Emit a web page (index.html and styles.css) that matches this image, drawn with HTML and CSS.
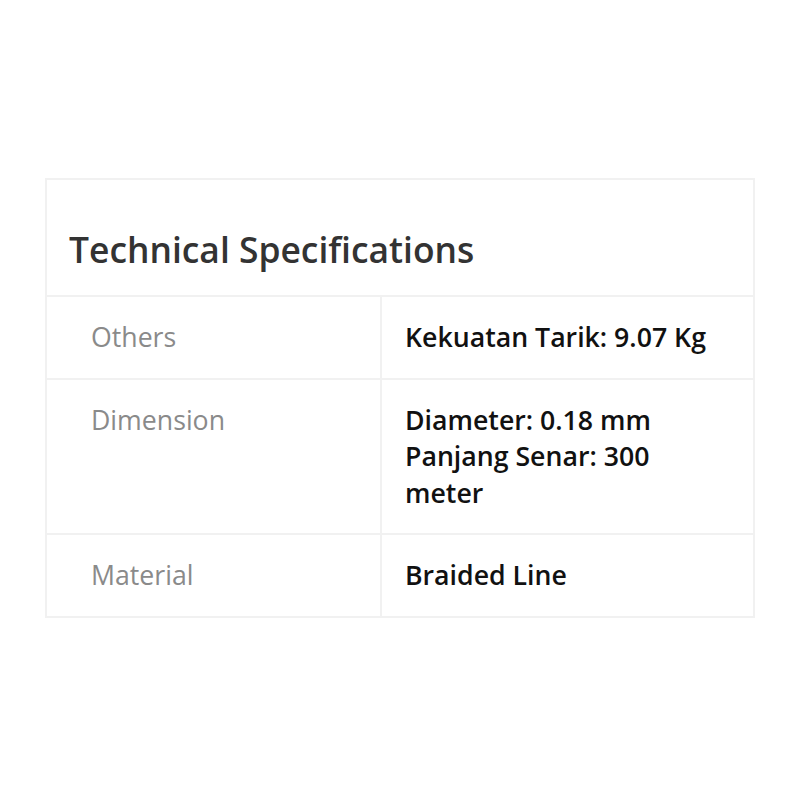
FILE: index.html
```html
<!DOCTYPE html>
<html lang="en">
<head>
<meta charset="utf-8">
<title>Technical Specifications</title>
<link rel="stylesheet" href="styles.css">
</head>
<body>
<section class="card">
  <h2 class="card-title">Technical Specifications</h2>
  <div class="row">
    <div class="label">Others</div>
    <div class="value">Kekuatan Tarik: 9.07 Kg</div>
  </div>
  <div class="row">
    <div class="label">Dimension</div>
    <div class="value">Diameter: 0.18 mm<br>Panjang Senar: 300 meter</div>
  </div>
  <div class="row">
    <div class="label">Material</div>
    <div class="value">Braided Line</div>
  </div>
</section>
</body>
</html>
```

FILE: styles.css
```css
html, body {
  margin: 0;
  padding: 0;
  background: #ffffff;
}

body {
  font-family: "Open Sans", "Noto Sans", sans-serif;
  padding: 178px 45px 0 45px;
}

.card {
  width: 710px;
  box-sizing: border-box;
  border: 2px solid #f1f1f1;
}

.card-title {
  margin: 0;
  padding: 45px 24px 22px 22px;
  font-size: 35.4px;
  line-height: 48px;
  font-weight: 600;
  color: #333333;
}

.row {
  display: grid;
  grid-template-columns: 335px 1fr;
  border-top: 2px solid #f1f1f1;
}

.label {
  padding: 22px 24px 22px 44px;
  font-size: 26.7px;
  line-height: 36.5px;
  color: #8a8a8a;
  border-right: 2px solid #f1f1f1;
}

.value {
  padding: 22px 24px 22px 23px;
  font-size: 26.7px;
  line-height: 36.5px;
  font-weight: 600;
  color: #111111;
}
```
